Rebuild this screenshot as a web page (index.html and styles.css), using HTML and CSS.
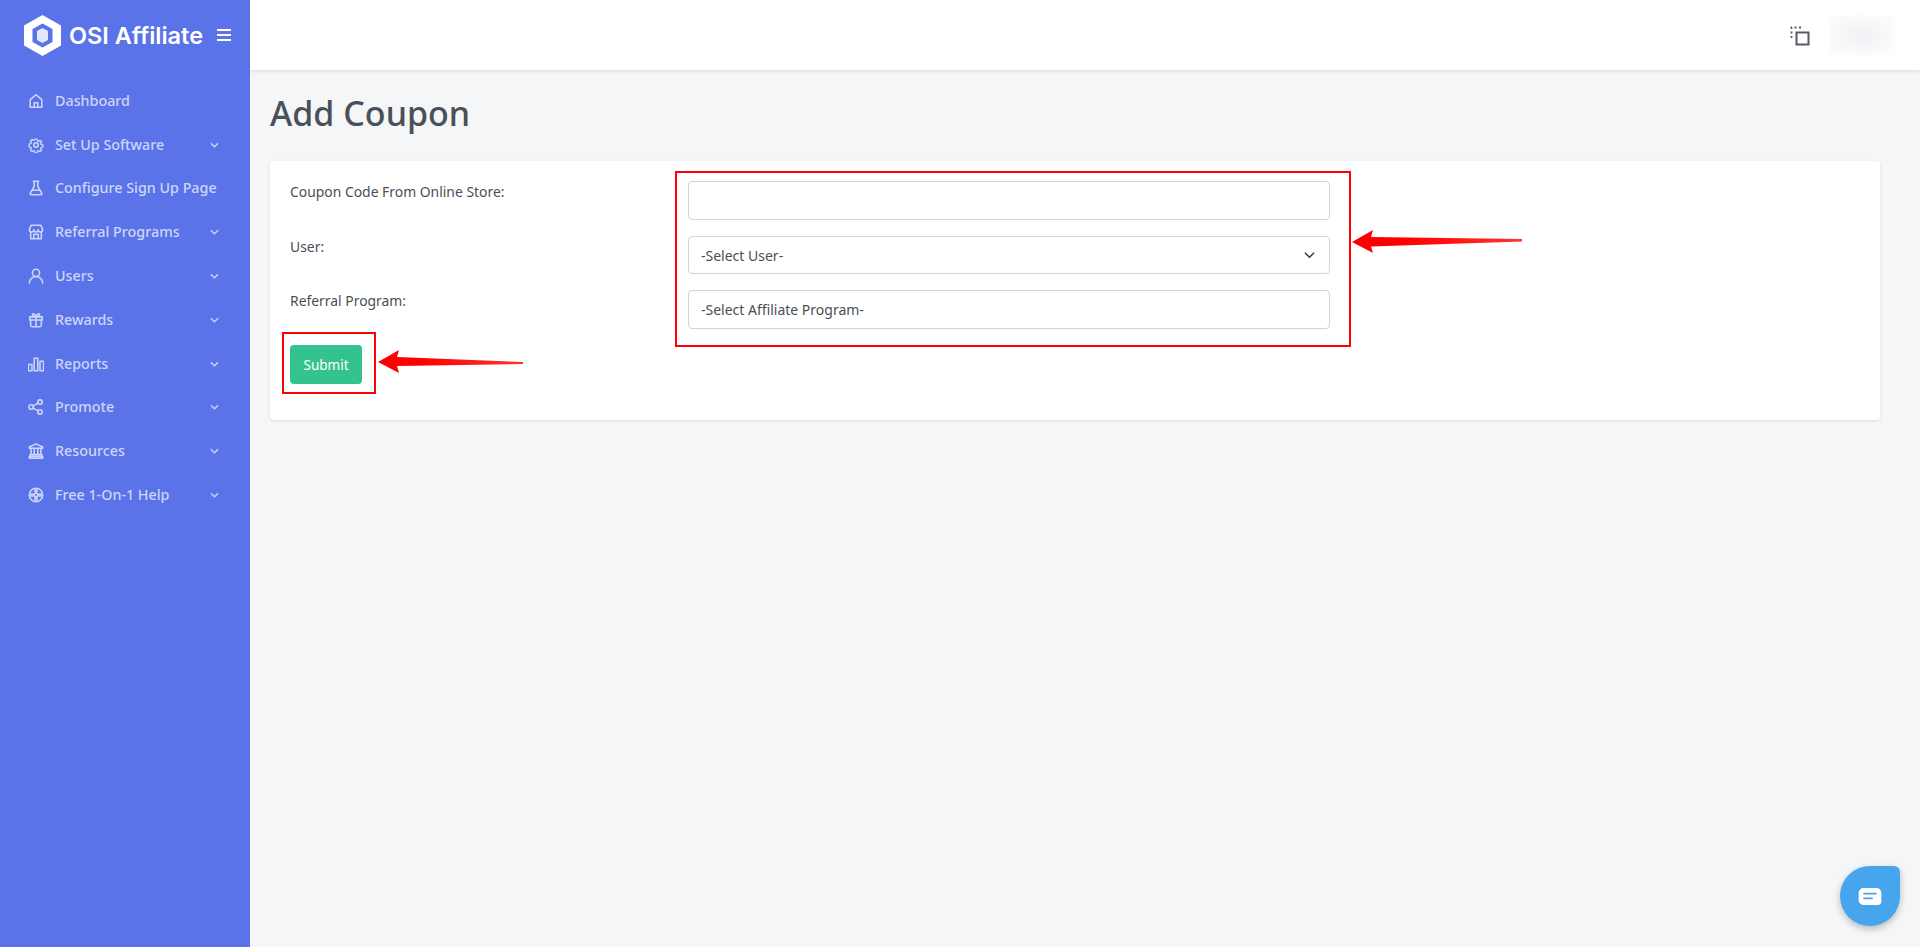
FILE: index.html
```html
<!DOCTYPE html>
<html lang="en">
<head>
<meta charset="utf-8">
<title>Add Coupon</title>
<link rel="stylesheet" href="styles.css">
</head>
<body>
<div class="layout">
  <aside class="sidebar">
    <div class="brand">
      <svg class="brand-mark" viewBox="0 0 37 41"><path fill="#fff" fill-rule="evenodd" d="M18.500 0 37 10.500V30.500L18.500 41 0 30.500V10.500ZM18.500 8.500 8.500 14V27L18.500 32.500 28.500 27V14Z"/><path fill="#e4e8fc" d="M18.500 13 13 16V25L18.500 28 24 25V16Z"/></svg>
      <span class="brand-name">OSI Affiliate</span>
      <svg class="brand-toggle" viewBox="0 0 14 14"><path d="M0 2H14M0 7H14M0 12H14" stroke="#fff" stroke-width="2"/></svg>
    </div>
    <nav class="menu">
      <a class="item"><svg class="ico" viewBox="0 0 18 18"><path d="M2.500 16V7.500L9 2l6.500 5.500V16ZM7 16v-5h4v5"/></svg><span class="label">Dashboard</span></a>
      <a class="item"><svg class="ico" viewBox="0 0 18 18"><circle cx="9" cy="9" r="2.500"/><path d="M7.600 1.500h2.800l.4 2.200 1.400.6 1.900-1.200 2 2-1.200 1.900.6 1.400 2.200.4v2.800l-2.200.4-.6 1.400 1.200 1.900-2 2-1.900-1.200-1.400.6-.4 2.200H7.600l-.4-2.200-1.400-.6-1.900 1.200-2-2 1.200-1.900-.6-1.400-2.200-.4V7.600l2.200-.4.6-1.400-1.200-1.900 2-2 1.900 1.200 1.400-.6Z" transform="translate(1 1) scale(.89)"/></svg><span class="label">Set Up Software</span><svg class="caret" viewBox="0 0 10 6"><path d="M1 1l4 4 4-4"/></svg></a>
      <a class="item"><svg class="ico" viewBox="0 0 18 18"><path d="M6 1.500h6M7 1.500v5.500L2.500 15a1 1 0 0 0 .9 1.500h11.200a1 1 0 0 0 .9-1.500L11 7V1.500M5 11.500h8"/></svg><span class="label">Configure Sign Up Page</span></a>
      <a class="item"><svg class="ico" viewBox="0 0 18 18"><path d="M3.500 1.500h11l2 5a2.500 2.500 0 0 1-5 0 2.500 2.500 0 0 1-5 0 2.500 2.500 0 0 1-5 0ZM3 9v7.500h12V9M6.500 16.500v-5h5v5"/></svg><span class="label">Referral Programs</span><svg class="caret" viewBox="0 0 10 6"><path d="M1 1l4 4 4-4"/></svg></a>
      <a class="item"><svg class="ico" viewBox="0 0 18 18"><circle cx="9" cy="5.500" r="4"/><path d="M1.500 17c0-4 3.300-7.500 7.500-7.500s7.500 3.500 7.500 7.500"/></svg><span class="label">Users</span><svg class="caret" viewBox="0 0 10 6"><path d="M1 1l4 4 4-4"/></svg></a>
      <a class="item"><svg class="ico" viewBox="0 0 18 18"><path d="M2 5.500h14v3.500H2ZM3 9v6a1.500 1.500 0 0 0 1.500 1.500h9A1.500 1.500 0 0 0 15 15V9M9 5.500v11M9 5.500C7 5.500 5 4.500 5 3s2.500-2 4 2.500C10.500 1 13 1.500 13 3s-2 2.500-4 2.500"/></svg><span class="label">Rewards</span><svg class="caret" viewBox="0 0 10 6"><path d="M1 1l4 4 4-4"/></svg></a>
      <a class="item"><svg class="ico" viewBox="0 0 18 18"><path d="M.5 9.500h4v7h-4ZM7 2.500h4v14H7ZM13.500 6h4v10.500h-4Z"/></svg><span class="label">Reports</span><svg class="caret" viewBox="0 0 10 6"><path d="M1 1l4 4 4-4"/></svg></a>
      <a class="item"><svg class="ico" viewBox="0 0 18 18"><circle cx="3.500" cy="9" r="2.500"/><circle cx="13.500" cy="3.500" r="2.500"/><circle cx="13.500" cy="14.500" r="2.500"/><path d="M5.800 7.800l5.500-3.100M5.800 10.200l5.500 3.100"/></svg><span class="label">Promote</span><svg class="caret" viewBox="0 0 10 6"><path d="M1 1l4 4 4-4"/></svg></a>
      <a class="item"><svg class="ico" viewBox="0 0 18 18"><path d="M9 1 16.500 4.500V6h-15V4.500ZM3.500 6v7M7 6v7M11 6v7M14.500 6v7M2.500 13h13v2h-13ZM1.500 15h15v2h-15Z"/></svg><span class="label">Resources</span><svg class="caret" viewBox="0 0 10 6"><path d="M1 1l4 4 4-4"/></svg></a>
      <a class="item"><svg class="ico" viewBox="0 0 18 18"><circle cx="9" cy="9" r="7.500"/><circle cx="9" cy="9" r="2"/><circle cx="9" cy="4.500" r="1.400"/><circle cx="9" cy="13.500" r="1.400"/><circle cx="4.500" cy="9" r="1.400"/><circle cx="13.500" cy="9" r="1.400"/></svg><span class="label">Free 1-On-1 Help</span><svg class="caret" viewBox="0 0 10 6"><path d="M1 1l4 4 4-4"/></svg></a>
    </nav>
  </aside>
  <div class="main">
    <header class="topbar">
      <svg class="top-ico" viewBox="0 0 20 20"><path class="dash" d="M1.500 12V1.500H13"/><path class="solid" d="M6.500 6.500h12v12h-12Z"/></svg>
      <div class="blurred"></div>
    </header>
    <section class="content">
      <h1 class="title">Add Coupon</h1>
      <form class="card">
        <div class="row">
          <label class="field-label">Coupon Code From Online Store:</label>
          <input class="control" type="text">
        </div>
        <div class="row short">
          <label class="field-label">User:</label>
          <select class="control picker"><option>-Select User-</option></select>
        </div>
        <div class="row">
          <label class="field-label">Referral Program:</label>
          <select class="control plain"><option>-Select Affiliate Program-</option></select>
        </div>
        <button class="submit" type="button">Submit</button>
        <div class="mark mark-fields"></div>
        <div class="mark mark-submit"></div>
        <svg class="arrow arrow-fields" viewBox="0 0 170 24"><defs><linearGradient id="fade"><stop offset="0.300" stop-color="#f00"/><stop offset="1" stop-color="#f00" stop-opacity=".8"/></linearGradient></defs><path fill="url(#fade)" d="M0 12 21 0l-2 7L170 9v2.500L19 16.500l2 6.500Z"/></svg>
        <svg class="arrow arrow-submit" viewBox="0 0 146 24"><path fill="url(#fade)" d="M0 12 21 0l-2 7L145 12v2L19 16l2 7Z"/></svg>
      </form>
    </section>
  </div>
</div>
<div class="chat"><svg viewBox="0 0 24 18"><path fill="#fff" fill-rule="evenodd" d="M5 0h14a5 5 0 0 1 5 5v9a4 4 0 0 1-4 4H5a5 5 0 0 1-5-5V5a5 5 0 0 1 5-5ZM5 5v2h14V5ZM5 10v2h10v-2Z"/></svg></div>
</body>
</html>
```
FILE: styles.css
```css
* { box-sizing: border-box; }
html, body { margin: 0; height: 100%; }
body {
  font-family: "Noto Sans", "Open Sans", sans-serif;
  background: #f5f6f8;
  color: #495057;
  overflow: hidden;
}
.layout { display: flex; height: 947px; }

.sidebar { width: 250px; flex: none; background: #5a73e8; }
.brand { display: flex; align-items: center; height: 70px; padding: 1px 0 0 24px; }
.brand-mark { width: 37px; height: 41px; flex: none; }
.brand-name {
  width: 132px;
  margin: 0 16px 0 8px;
  flex: none;
  color: #fff;
  font: 600 23.500px/1 "Inter", sans-serif;
  letter-spacing: 0;
  white-space: nowrap;
}
.brand-toggle { width: 14px; height: 14px; flex: none; margin-top: -2px; }

.menu { padding-top: 9px; display: flex; flex-direction: column; }
.item {
  display: flex;
  align-items: center;
  height: 43.800px;
  padding-left: 28px;
  color: #cdd6fa;
  font-size: 14.300px;
  font-weight: 500;
  white-space: nowrap;
}
.ico {
  width: 16px; height: 16px; flex: none;
  fill: none; stroke: #cdd6fa; stroke-width: 1.750;
  stroke-linejoin: round; stroke-linecap: round;
}
.label { margin-left: 11px; flex: 1; position: relative; top: -.5px; }
.caret {
  width: 9px; height: 6px; margin-right: 31px; flex: none;
  fill: none; stroke: #cdd6fa; stroke-width: 1.500;
}

.main { flex: 1; min-width: 0; display: flex; flex-direction: column; }
.topbar {
  height: 70px; flex: none;
  background: #fff;
  box-shadow: 0 1px 4px rgba(60, 70, 100, .16);
  display: flex; align-items: center; justify-content: flex-end;
  padding-right: 25px;
  gap: 19px;
}
.top-ico { width: 20px; height: 20px; fill: none; stroke: #555b6d; margin-top: 1px; }
.dash { stroke-width: 1.800; stroke-dasharray: 2 2.500; }
.solid { stroke-width: 2; }
.blurred {
  width: 66px; height: 40px;
  background: radial-gradient(ellipse at center, #f0f1f4 0, #fafafb 65%, #fdfdfd 100%);
}

.content { padding: 0 40px 0 20px; }
.title {
  margin: 20px 0 25px;
  font-size: 34px; line-height: 46px; font-weight: 500;
  color: #495057;
}
.card {
  position: relative;
  background: #fff;
  border-radius: 4px;
  box-shadow: 0 1px 3px rgba(60, 70, 100, .14);
  height: 259px;
  padding: 20px;
}
.row { display: grid; grid-template-columns: 398px 642px; margin-bottom: 16px; }
.field-label { font-size: 13.900px; line-height: 20px; padding-top: 1px; color: #495057; }
.control {
  display: block;
  width: 100%; height: 39px;
  padding: 0 12px;
  border: 1px solid #ced4da;
  border-radius: 4px;
  background: #fff;
  font: 14px "Noto Sans", sans-serif;
  color: #495057;
  appearance: none;
  outline: none;
}
.row.short .control { height: 38px; }
.picker {
  background: #fff url("data:image/svg+xml,%3Csvg xmlns='http://www.w3.org/2000/svg' viewBox='0 0 12 8'%3E%3Cpath d='M1 1.500l5 5 5-5' fill='none' stroke='%23343a40' stroke-width='1.600'/%3E%3C/svg%3E") no-repeat right 14px center / 11px 8px;
}
.submit {
  display: block;
  width: 72px; height: 39px;
  border: 0; border-radius: 4px;
  background: #34c38f; color: #fff;
  font: 13.500px "Noto Sans", sans-serif;
}

.mark { position: absolute; border: 2px solid #f00; }
.mark-fields { left: 405px; top: 10px; width: 676px; height: 176px; }
.mark-submit { left: 12px; top: 171px; width: 94px; height: 62px; }
.arrow { position: absolute; }
.arrow-fields { left: 1082px; top: 69px; width: 170px; height: 24px; }
.arrow-submit { left: 108px; top: 189px; width: 146px; height: 24px; }

.chat {
  position: fixed; right: 20px; bottom: 21px;
  width: 60px; height: 60px;
  border-radius: 50% 6px 50% 50%;
  background: #47a5ee;
  box-shadow: 0 3px 7px rgba(0, 0, 0, .25);
  display: flex; align-items: center; justify-content: center;
}
.chat svg { width: 24px; height: 17px; }
```
